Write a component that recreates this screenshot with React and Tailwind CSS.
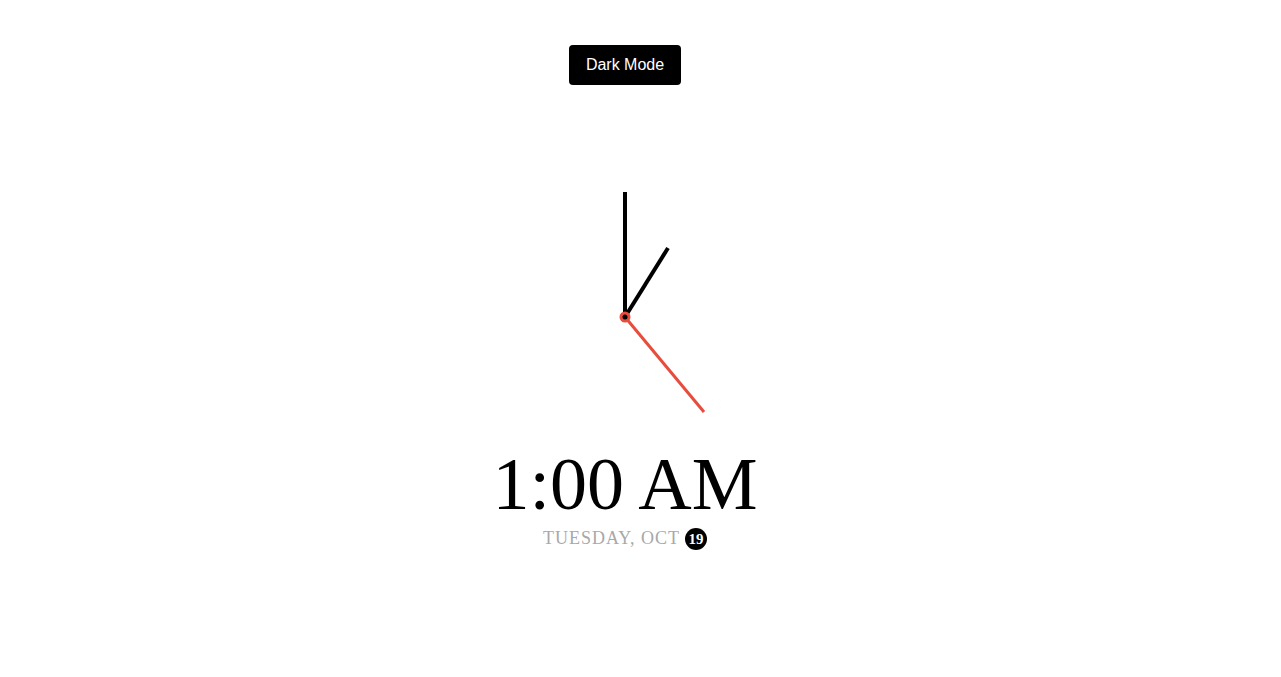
import React from 'react';

const ClockFace = () => {
  // center of the face sits at (130,130)
  return (
    <svg width="260" height="260" viewBox="0 0 260 260">
      <line x1="130" y1="130" x2="130" y2="5" stroke="#000" strokeWidth="4" />
      <line x1="130" y1="130" x2="173" y2="61" stroke="#000" strokeWidth="4" />
      <line x1="130" y1="130" x2="209" y2="225" stroke="#e74c3c" strokeWidth="3" />
      <circle cx="130" cy="130" r="5.5" fill="#e74c3c" />
      <circle cx="130" cy="130" r="2.5" fill="#000" />
    </svg>
  );
};

export default function App() {
  return (
    <div className="min-h-screen bg-white">
      <div className="w-[1250px] flex flex-col items-center">
        <button className="mt-[45px] h-[40px] w-[112px] rounded-[4px] bg-black text-white text-[16px] font-['Liberation_Sans',Arial,sans-serif]">
          Dark Mode
        </button>
        <div className="mt-[102px]">
          <ClockFace />
        </div>
        <div className="text-[74px] leading-none text-black font-['Liberation_Serif','Times_New_Roman',serif]">
          1:00 AM
        </div>
        <div className="mt-[5px] flex items-center font-['Liberation_Serif','Times_New_Roman',serif]">
          <span className="text-[18px] leading-[25px] tracking-[1px] uppercase text-[#a8a8a8]">Tuesday, Oct</span>
          <span className="ml-[5px] mt-[1px] w-[22px] h-[22px] rounded-full bg-black text-white text-[15px] font-bold flex items-center justify-center">
            19
          </span>
        </div>
      </div>
    </div>
  );
}
